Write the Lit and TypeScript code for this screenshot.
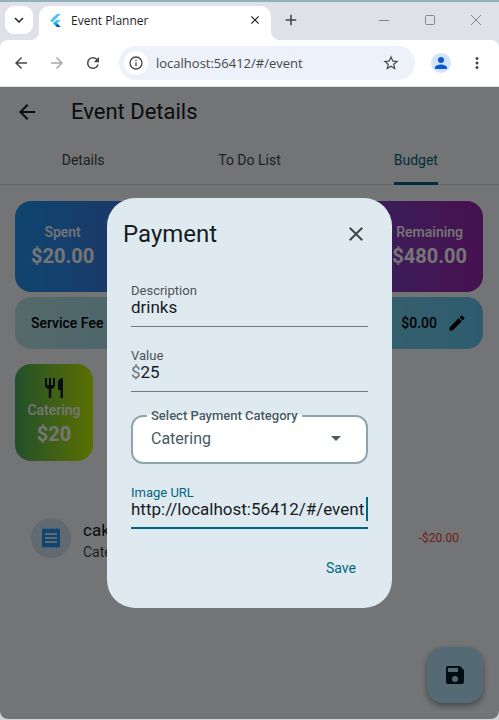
import { LitElement, html, css, svg } from "lit";
import { customElement, property, state } from "lit/decorators.js";
import { classMap } from "lit/directives/class-map.js";

const paths = {
  back: "M20 11H7.83l5.59-5.59L12 4l-8 8 8 8 1.41-1.41L7.83 13H20v-2z",
  forward: "M4 11h12.17l-5.59-5.59L12 4l8 8-8 8-1.41-1.41L16.17 13H4v-2z",
  reload:
    "M17.65 6.35A7.96 7.96 0 0 0 12 4a8 8 0 1 0 7.73 10h-2.08A6 6 0 1 1 12 6c1.66 0 3.14.69 4.22 1.78L13 11h7V4l-2.35 2.35z",
  close:
    "M19 6.41 17.59 5 12 10.59 6.41 5 5 6.41 10.59 12 5 17.59 6.41 19 12 13.41 17.59 19 19 17.59 13.41 12z",
  add: "M19 13h-6v6h-2v-6H5v-2h6V5h2v6h6v2z",
  chevron: "M7.41 8.59 12 13.17l4.59-4.58L18 10l-6 6-6-6 1.41-1.41z",
  star: "m22 9.24-7.19-.62L12 2 9.19 8.63 2 9.24l5.46 4.73L5.82 21 12 17.27 18.18 21l-1.63-7.03L22 9.24zM12 15.4l-3.76 2.27 1-4.28-3.32-2.88 4.38-.38L12 6.1l1.71 4.04 4.38.38-3.32 2.88 1 4.28L12 15.4z",
  info: "M11 7h2v2h-2zm0 4h2v6h-2zm1-9a10 10 0 1 0 0 20 10 10 0 0 0 0-20zm0 18a8 8 0 1 1 0-16 8 8 0 0 1 0 16z",
  person:
    "M12 12a4 4 0 1 0 0-8 4 4 0 0 0 0 8zm0 2c-2.67 0-8 1.34-8 4v2h16v-2c0-2.66-5.33-4-8-4z",
  more: "M12 8a2 2 0 1 0 0-4 2 2 0 0 0 0 4zm0 2a2 2 0 1 0 0 4 2 2 0 0 0 0-4zm0 6a2 2 0 1 0 0 4 2 2 0 0 0 0-4z",
  pencil:
    "M3 17.25V21h3.75L17.81 9.94l-3.75-3.75L3 17.25zM20.71 7.04a1 1 0 0 0 0-1.41l-2.34-2.34a1 1 0 0 0-1.41 0l-1.83 1.83 3.75 3.75 1.83-1.83z",
  restaurant:
    "M11 9H9V2H7v7H5V2H3v7c0 2.12 1.66 3.84 3.75 3.97V22h2.5v-9.03C11.34 12.84 13 11.12 13 9V2h-2v7zm5-3v8h2.5v8H21V2c-2.76 0-5 2.24-5 4z",
  receipt:
    "M18 17H6v-2h12v2zm0-4H6v-2h12v2zm0-4H6V7h12v2zM3 22l1.5-1.5L6 22l1.5-1.5L9 22l1.5-1.5L12 22l1.5-1.5L15 22l1.5-1.5L18 22l1.5-1.5L21 22V2l-1.5 1.5L18 2l-1.500 1.500L15 2l-1.500 1.500L12 2l-1.500 1.500L9 2 7.500 3.500 6 2 4.500 3.500 3 2v20z",
  save: "M17 3H5a2 2 0 0 0-2 2v14a2 2 0 0 0 2 2h14a2 2 0 0 0 2-2V7l-4-4zm-5 16a3 3 0 1 1 0-6 3 3 0 0 1 0 6zm3-10H5V5h10v4z",
  arrowDown: "m7 10 5 5 5-5z",
} as const;

const icon = (name: keyof typeof paths, size = 24) => svg`
  <svg width=${size} height=${size} viewBox="0 0 24 24" fill="currentColor" aria-hidden="true">
    <path d=${paths[name]}></path>
  </svg>`;

const base = css`
  * {
    box-sizing: border-box;
  }
  button,
  input,
  select {
    font: inherit;
    color: inherit;
    border: 0;
    margin: 0;
    padding: 0;
    background: none;
    outline: none;
  }
  button {
    display: flex;
    align-items: center;
    justify-content: center;
    flex: none;
  }
  svg {
    display: block;
    flex: none;
  }
`;

@customElement("browser-bar")
class BrowserBar extends LitElement {
  static styles = [
    base,
    css`
      :host {
        display: block;
        flex: none;
        background: #dee1e8;
        border-top: 2px solid #93b1bb;
        font-family: "Open Sans", "Noto Sans", sans-serif;
        color: #1f1f1f;
      }
      .strip {
        display: flex;
        height: 38px;
        padding-left: 5px;
      }
      .search {
        width: 28px;
        height: 28px;
        margin-top: 4px;
        border-radius: 9px;
        background: #fff;
      }
      .tab {
        position: relative;
        display: flex;
        align-items: center;
        flex: 0 1 232px;
        min-width: 0;
        margin: 4px 0 0 6px;
        padding: 0 9px 6px 10px;
        gap: 9px;
        border-radius: 10px 10px 0 0;
        background: #fff;
        font-size: 12px;
      }
      .tab::before,
      .tab::after {
        content: "";
        position: absolute;
        bottom: 0;
        width: 10px;
        height: 10px;
      }
      .tab::before {
        right: 100%;
        background: radial-gradient(circle at 0 0, transparent 10px, #fff 11px);
      }
      .tab::after {
        left: 100%;
        background: radial-gradient(circle at 100% 0, transparent 10px, #fff 11px);
      }
      .name {
        flex: 1;
        white-space: nowrap;
      }
      .new {
        width: 28px;
        height: 28px;
        margin: 4px 0 0 6px;
        color: #3c4043;
      }
      .window {
        display: flex;
        margin-left: auto;
      }
      .window button {
        width: 46px;
        height: 36px;
        color: #85898f;
      }
      .tools {
        display: flex;
        align-items: center;
        height: 47px;
        padding: 0 13px 0 7px;
        border-bottom: 1px solid #dfe1e5;
        border-radius: 8px 8px 0 0;
        background: #fff;
        color: #474747;
      }
      .tool {
        width: 28px;
        height: 28px;
        margin-right: 8px;
      }
      .muted {
        color: #a9a9a9;
      }
      .address {
        display: flex;
        align-items: center;
        flex: 1;
        min-width: 0;
        height: 34px;
        margin-left: 4px;
        padding: 0 15px 0 5px;
        border-radius: 17px;
        background: #ecf1fa;
        font-size: 13px;
      }
      .info {
        width: 24px;
        height: 24px;
        margin-right: 8px;
        border-radius: 50%;
        background: #fff;
      }
      .url {
        flex: 1;
        min-width: 0;
      }
      .avatar {
        width: 20px;
        height: 20px;
        margin: 0 17px 0 16px;
        border-radius: 50%;
        background: #d3e3fd;
        color: #0b57d0;
      }
    `,
  ];

  render() {
    return html`
      <div class="strip">
        <button class="search" aria-label="Search tabs">${icon("chevron", 18)}</button>
        <div class="tab">
          <svg width="13" height="13" viewBox="0 0 24 24" aria-hidden="true">
            <path d="M14.300 0 2.300 12 6 15.700 21.700 0z" fill="#47c5fb" />
            <path d="M14.300 11.100 7.900 17.500l3.700 3.700L21.700 11.100z" fill="#47c5fb" />
            <path d="m11.600 21.200 2.700 2.800h7.400l-6.400-6.500z" fill="#00569e" />
            <path d="m7.900 17.500 3.700-3.700 3.700 3.700-3.700 3.700z" fill="#00b5f8" />
          </svg>
          <span class="name">Event Planner</span>
          <button aria-label="Close tab">${icon("close", 14)}</button>
        </div>
        <button class="new" aria-label="New tab">${icon("add", 18)}</button>
        <div class="window">
          <button aria-label="Minimize">
            <svg width="12" height="12" viewBox="0 0 12 12"><path d="M1 6.500h10" stroke="currentColor" /></svg>
          </button>
          <button aria-label="Maximize">
            <svg width="12" height="12" viewBox="0 0 12 12">
              <rect x="1.500" y="1.500" width="9" height="9" rx="1" fill="none" stroke="currentColor" />
            </svg>
          </button>
          <button aria-label="Close">
            <svg width="12" height="12" viewBox="0 0 12 12">
              <path d="m1 1 10 10M11 1 1 11" stroke="currentColor" />
            </svg>
          </button>
        </div>
      </div>
      <div class="tools">
        <button class="tool" aria-label="Back">${icon("back", 18)}</button>
        <button class="tool muted" aria-label="Forward">${icon("forward", 18)}</button>
        <button class="tool" aria-label="Reload">${icon("reload", 18)}</button>
        <div class="address">
          <button class="info" aria-label="Site information">${icon("info", 16)}</button>
          <input class="url" aria-label="Address" value="localhost:56412/#/event" />
          <button aria-label="Bookmark">${icon("star", 18)}</button>
        </div>
        <button class="avatar" aria-label="Profile">${icon("person", 18)}</button>
        <button aria-label="Menu">${icon("more", 18)}</button>
      </div>
    `;
  }
}

@customElement("text-field")
class TextField extends LitElement {
  @property() label = "";
  @property() value = "";
  @property() prefixText = "";
  @property({ type: Boolean }) active = false;

  static styles = [
    base,
    css`
      :host {
        display: block;
      }
      .field {
        padding: 6px 0 10px;
        border-bottom: 1px solid #70787c;
      }
      label {
        display: block;
        font-size: 13px;
        line-height: 14px;
        color: #4a5357;
      }
      .row {
        display: flex;
        height: 18px;
        font-size: 17px;
        line-height: 18px;
        color: #171c1f;
      }
      .prefix {
        color: #6b7478;
      }
      input {
        flex: 1;
        min-width: 0;
        height: 18px;
      }
      .active {
        padding-bottom: 9px;
        border-bottom: 2px solid #006780;
      }
      .active label {
        color: #006780;
      }
      .active .row {
        align-items: center;
      }
      .caret {
        flex: none;
        width: 2px;
        height: 24px;
        background: #006780;
      }
    `,
  ];

  render() {
    return html`
      <div class=${classMap({ field: true, active: this.active })}>
        <label for="input">${this.label}</label>
        <div class="row">
          ${this.prefixText ? html`<span class="prefix">${this.prefixText}</span>` : ""}
          <input id="input" .value=${this.value} />
          ${this.active ? html`<span class="caret"></span>` : ""}
        </div>
      </div>
    `;
  }
}

@customElement("payment-dialog")
class PaymentDialog extends LitElement {
  static styles = [
    base,
    css`
      :host {
        display: block;
        width: 285px;
        max-width: calc(100% - 32px);
        border-radius: 28px;
        background: #dfeaf0;
        color: #171c1f;
      }
      header {
        display: flex;
        align-items: center;
        justify-content: space-between;
        padding: 16px 16px 24px;
      }
      h2 {
        margin: 0;
        font-size: 24px;
        font-weight: 400;
        line-height: 32px;
      }
      .close {
        width: 40px;
        height: 40px;
        color: #40484c;
      }
      form {
        display: flex;
        flex-direction: column;
        gap: 16px;
        padding: 0 24px 20px;
      }
      fieldset {
        position: relative;
        display: block;
        min-width: 0;
        height: 56px;
        margin: 0;
        padding: 0 16px 0 14px;
        border: 2px solid #90a4ae;
        border-radius: 12px;
        background: #fff;
        color: #455a64;
      }
      legend {
        padding: 0 4px;
        font-size: 13px;
        font-weight: 500;
        line-height: 16px;
      }
      .pick {
        display: flex;
        align-items: center;
        height: 28px;
      }
      select {
        flex: 1;
        min-width: 0;
        padding-left: 4px;
        appearance: none;
        font-size: 16px;
      }
      .pick svg {
        margin-right: 2px;
      }
      .save {
        align-self: flex-end;
        height: 40px;
        margin-top: 3px;
        padding: 0 12px;
        font-size: 14px;
        color: #006780;
      }
    `,
  ];

  render() {
    return html`
      <header>
        <h2>Payment</h2>
        <button class="close" aria-label="Close">${icon("close")}</button>
      </header>
      <form @submit=${(e: Event) => e.preventDefault()}>
        <text-field label="Description" value="drinks"></text-field>
        <text-field label="Value" value="25" .prefixText=${"$"}></text-field>
        <fieldset>
          <legend><label for="category">Select Payment Category</label></legend>
          <div class="pick">
            <select id="category">
              <option>Catering</option>
            </select>
            ${icon("arrowDown")}
          </div>
        </fieldset>
        <text-field label="Image URL" value="http://localhost:56412/#/event" active></text-field>
        <button class="save">Save</button>
      </form>
    `;
  }
}

@customElement("app-root")
class AppRoot extends LitElement {
  @state() private tab = "Budget";

  static styles = [
    base,
    css`
      :host {
        display: flex;
        flex-direction: column;
        min-height: 100vh;
        background: #cfd4d8;
        font-family: Roboto, "Liberation Sans", sans-serif;
      }
      .view {
        position: relative;
        flex: 1;
        margin-bottom: 1px;
        border-radius: 0 0 8px 8px;
        overflow: hidden;
        background: #f9fdff;
        color: #171c1f;
      }
      .bar {
        display: flex;
        align-items: center;
        height: 50px;
        padding-left: 15px;
        gap: 32px;
      }
      h1 {
        margin: 0;
        font-size: 22px;
        font-weight: 400;
        line-height: 24px;
      }
      nav {
        display: grid;
        grid-template-columns: repeat(3, 1fr);
        height: 48px;
        border-bottom: 1px solid #d8dde0;
        font-size: 14px;
        color: #40484c;
      }
      nav button {
        justify-self: center;
        height: 48px;
        padding-top: 1px;
        border-bottom: 3px solid transparent;
      }
      nav .current {
        color: #006780;
        border-bottom-color: #006780;
      }
      main {
        display: flex;
        flex-direction: column;
        padding: 16px 16px 0 15px;
      }
      .card {
        border-radius: 16px;
        color: #fff;
      }
      .totals {
        display: flex;
        align-items: center;
        justify-content: space-between;
        height: 91px;
        padding: 0 16px 2px;
        background: linear-gradient(90deg, #2196f3, #9c27b0);
      }
      .total {
        display: flex;
        flex-direction: column;
        align-items: center;
        font-size: 14px;
        font-weight: 500;
        line-height: 20px;
      }
      .total strong {
        font-size: 20px;
        font-weight: 700;
        line-height: 28px;
      }
      .fee {
        display: flex;
        align-items: center;
        height: 52px;
        margin-top: 5px;
        padding: 0 16px;
        gap: 10px;
        background: linear-gradient(90deg, #b9e6e8, #64c8f0);
        color: #000;
        font-size: 14px;
        font-weight: 500;
      }
      .fee span {
        flex: 1;
      }
      .category {
        align-self: flex-start;
        min-width: 78px;
        height: 97px;
        margin-top: 15px;
        padding: 12px 12px 0;
        background: linear-gradient(90deg, #4cae60, #c6f400);
      }
      .category svg {
        color: #171c1f;
      }
      .payment {
        display: flex;
        align-items: center;
        height: 72px;
        margin: 41px 8px 0 0;
        padding: 0 16px;
        gap: 12px;
      }
      .thumb {
        display: grid;
        place-items: center;
        width: 40px;
        height: 40px;
        border-radius: 50%;
        background: #d3e6f5;
        color: #2196f3;
      }
      .what {
        flex: 1;
        padding-top: 4px;
        font-size: 14px;
        line-height: 20px;
      }
      .what p {
        margin: 0;
        color: #40484c;
      }
      .what .title {
        font-size: 17px;
        line-height: 24px;
        color: #171c1f;
      }
      .cost {
        font-size: 12px;
        color: #f44336;
      }
      .fab {
        position: absolute;
        right: 16px;
        bottom: 16px;
        width: 56px;
        height: 56px;
        border-radius: 16px;
        background: #b7eaff;
        color: #001f28;
        box-shadow: 0 3px 6px rgba(0, 0, 0, 0.4);
      }
      .scrim {
        position: absolute;
        inset: 0;
        display: flex;
        align-items: center;
        justify-content: center;
        background: rgba(0, 0, 0, 0.54);
      }
    `,
  ];

  render() {
    return html`
      <browser-bar></browser-bar>
      <div class="view">
        <div class="bar">
          <button aria-label="Back">${icon("back")}</button>
          <h1>Event Details</h1>
        </div>
        <nav>
          ${["Details", "To Do List", "Budget"].map(
            (name) => html`<button
              class=${classMap({ current: this.tab === name })}
              @click=${() => (this.tab = name)}
            >
              ${name}
            </button>`,
          )}
        </nav>
        <main>
          <section class="card totals">
            <div class="total">Spent<strong>$20.00</strong></div>
            <div class="total">Remaining<strong>$480.00</strong></div>
          </section>
          <section class="card fee">
            <span>Service Fee</span>
            $0.00
            <button aria-label="Edit service fee">${icon("pencil", 20)}</button>
          </section>
          <section class="card category total">
            ${icon("restaurant")} Catering<strong>$20</strong>
          </section>
          <section class="payment">
            <div class="thumb">${icon("receipt")}</div>
            <div class="what">
              <p class="title">cake</p>
              <p>Catering</p>
            </div>
            <span class="cost">-$20.00</span>
          </section>
        </main>
        <button class="fab" aria-label="Save event">${icon("save")}</button>
        <div class="scrim">
          <payment-dialog role="dialog" aria-label="Payment"></payment-dialog>
        </div>
      </div>
    `;
  }
}
